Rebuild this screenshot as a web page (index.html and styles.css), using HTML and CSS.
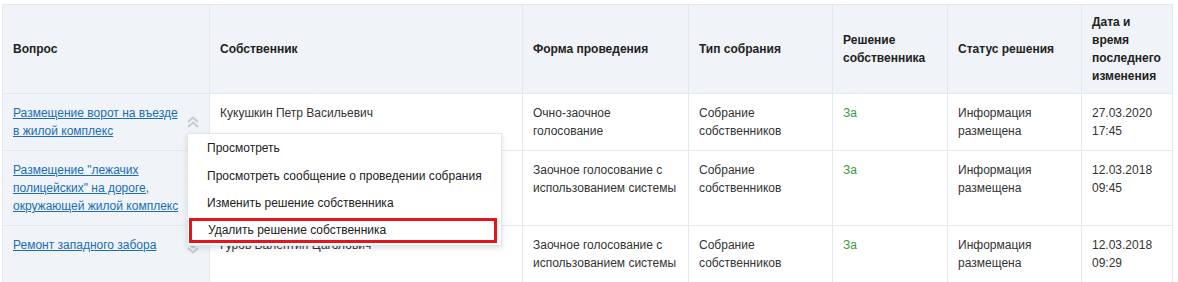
FILE: index.html
```
<!DOCTYPE html>
<html lang="ru">
<head>
<meta charset="UTF-8" />
<title>Решения собственника</title>
<link rel="stylesheet" href="styles.css">
</head>
<body>
  <table class="decisions">
    <colgroup>
      <col class="c-question">
      <col class="c-owner">
      <col class="c-form">
      <col class="c-type">
      <col class="c-decision">
      <col class="c-status">
      <col class="c-date">
    </colgroup>
    <thead>
      <tr>
        <th>Вопрос</th>
        <th>Собственник</th>
        <th>Форма проведения</th>
        <th>Тип собрания</th>
        <th>Решение собственника</th>
        <th>Статус решения</th>
        <th>Дата и время последнего изменения</th>
      </tr>
    </thead>
    <tbody>
      <tr>
        <td class="question">
          <a href="#">Размещение ворот на въезде в жилой комплекс</a>
          <svg class="toggle" width="14" height="12" viewBox="0 0 14 12"><path d="M2 6 L7 1.5 L12 6 M2 11 L7 6.5 L12 11" fill="none" stroke="#c6cbd1" stroke-width="2"/></svg>
          <!-- Меню действий -->
          <ul class="menu">
            <li>Просмотреть</li>
            <li>Просмотреть сообщение о проведении собрания</li>
            <li>Изменить решение собственника</li>
            <li class="marked">Удалить решение собственника</li>
          </ul>
        </td>
        <td>Кукушкин Петр Васильевич</td>
        <td>Очно-заочное голосование</td>
        <td>Собрание собственников</td>
        <td class="yes">За</td>
        <td>Информация размещена</td>
        <td>27.03.2020 17:45</td>
      </tr>
      <tr>
        <td class="question">
          <a href="#">Размещение "лежачих полицейских" на дороге, окружающей жилой комплекс</a>
        </td>
        <td></td>
        <td>Заочное голосование с использованием системы</td>
        <td>Собрание собственников</td>
        <td class="yes">За</td>
        <td>Информация размещена</td>
        <td>12.03.2018 09:45</td>
      </tr>
      <tr>
        <td class="question">
          <a href="#">Ремонт западного забора</a>
          <svg class="toggle down" width="14" height="12" viewBox="0 0 14 12"><path d="M2 1 L7 5.5 L12 1 M2 6 L7 10.5 L12 6" fill="none" stroke="#c6cbd1" stroke-width="2"/></svg>
        </td>
        <td>Гуров Валентин Цаголович</td>
        <td>Заочное голосование с использованием системы</td>
        <td>Собрание собственников</td>
        <td class="yes">За</td>
        <td>Информация размещена</td>
        <td>12.03.2018 09:29</td>
      </tr>
    </tbody>
  </table>
</body>
</html>
```

FILE: styles.css
```
* {
  box-sizing: border-box;
}

body {
  margin: 0;
  padding: 4px 0 0 2px;
  background: #fff;
  font-family: "Liberation Sans", Arial, sans-serif;
  font-size: 12px;
  line-height: 18px;
  color: #333;
}

.decisions {
  width: 1170px;
  border-collapse: collapse;
  table-layout: fixed;
}

.c-question { width: 207px; }
.c-owner { width: 313px; }
.c-form { width: 166px; }
.c-type { width: 144px; }
.c-decision { width: 115px; }
.c-status { width: 134px; }
.c-date { width: 91px; }

.decisions th,
.decisions td {
  border: 1px solid #e4e9ee;
  text-align: left;
}

.decisions th {
  background: #f0f3f7;
  font-weight: bold;
  color: #222;
  padding: 8px 8px 8px 10px;
  height: 89px;
  vertical-align: middle;
}

.decisions td {
  padding: 10px 8px 10px 10px;
  vertical-align: top;
}

/* Первая колонка */
.decisions td.question {
  background: #f0f3f7;
  padding-right: 26px;
  position: relative;
}

.question a {
  color: #1a6db5;
  text-decoration: underline;
}

.toggle {
  position: absolute;
  right: 9px;
  top: 22px;
}

.toggle.down {
  top: 16px;
}

.yes {
  color: #3b9a3b;
}

/* Выпадающее меню */
.menu {
  position: absolute;
  left: 184px;
  top: 39px;
  z-index: 10;
  width: 315px;
  margin: 0;
  padding: 1px 0 2px;
  list-style: none;
  background: #fff;
  border: 1px solid #e2e6ea;
  box-shadow: 0 2px 6px rgba(0, 0, 0, 0.12);
  color: #222;
  white-space: nowrap;
}

.menu li {
  height: 27.7px;
  line-height: 20px;
  padding: 3px 0 0 19px;
}

.menu li.marked {
  margin: 0 4px 0 1px;
  padding: 0 0 0 16px;
  height: 25px;
  line-height: 19px;
  border: 3px solid #e5141c;
}
```
